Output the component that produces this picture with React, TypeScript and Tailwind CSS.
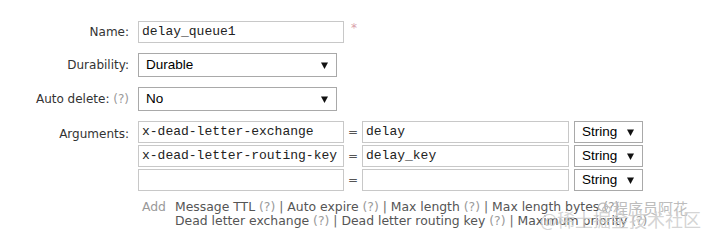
const labelCls = 'w-[130px] shrink-0 pr-[1px] text-right text-[12px] text-[#333]'

function Select({ value, width, height }: { value: string; width: string; height: string }) {
  return (
    <div
      className={`${width} ${height} flex items-center justify-between border border-[#a9a9a9] bg-white pl-[7px] pr-[8px] font-['Liberation_Sans',Arial,sans-serif] text-[13.5px] text-black`}
    >
      <span>{value}</span>
      <svg width="7" height="7" viewBox="0 0 7 7">
        <path d="M0 0.5 L7 0.5 L3.5 7 Z" fill="#111" />
      </svg>
    </div>
  )
}

function TextInput({ value, width }: { value: string; width: string }) {
  return (
    <div
      className={`${width} flex h-[22px] items-center border border-[#c8c8c8] bg-white px-[3px] font-['Liberation_Mono','Courier_New',monospace] text-[13px] text-[#222]`}
    >
      {value}
    </div>
  )
}

const Q = () => <span className="text-[#9a9a9a]">(?)</span>
const Sep = () => <span className="text-[#666]"> | </span>

const args = [
  { key: 'x-dead-letter-exchange', value: 'delay' },
  { key: 'x-dead-letter-routing-key', value: 'delay_key' },
  { key: '', value: '' },
]

export default function App() {
  return (
    <div className="relative h-[244px] w-[708px] overflow-hidden bg-white font-['DejaVu_Sans',Verdana,sans-serif]">
      <div className="flex flex-col pt-[21px]">
        {/* Name */}
        <div className="flex items-center">
          <span className={labelCls}>Name:</span>
          <div className="ml-[8px] flex items-start">
            <TextInput value="delay_queue1" width="w-[206px]" />
            <span className="ml-[7px] text-[12px] leading-[14px] text-[#d9a0aa]">*</span>
          </div>
        </div>

        {/* Durability */}
        <div className="mt-[10px] flex items-center">
          <span className={labelCls}>Durability:</span>
          <div className="ml-[8px]">
            <Select value="Durable" width="w-[199px]" height="h-[24px]" />
          </div>
        </div>

        {/* Auto delete */}
        <div className="mt-[10px] flex items-center">
          <span className={labelCls}>
            Auto delete: <Q />
          </span>
          <div className="ml-[8px]">
            <Select value="No" width="w-[199px]" height="h-[24px]" />
          </div>
        </div>

        {/* Arguments */}
        <div className="mt-[10px] flex items-start">
          <span className={`${labelCls} pt-[4px]`}>Arguments:</span>
          <div className="ml-[8px] flex flex-col gap-[2px]">
            {args.map((a, i) => (
              <div key={i} className="flex items-center">
                <TextInput value={a.key} width="w-[206px]" />
                <span className="w-[18px] text-center text-[12px] text-[#555]">=</span>
                <TextInput value={a.value} width="w-[207px]" />
                <div className="ml-[5px]">
                  <Select value="String" width="w-[69px]" height="h-[22px]" />
                </div>
              </div>
            ))}
          </div>
        </div>

        {/* Helpers */}
        <div className="mt-[9px] flex items-start text-[12.4px] leading-[14px] text-[#555]">
          <span className="ml-[142px] w-[33px] text-[#999]">Add</span>
          <div className="flex flex-col">
            <span className="whitespace-nowrap">
              Message TTL <Q />
              <Sep />
              Auto expire <Q />
              <Sep />
              Max length <Q />
              <Sep />
              Max length bytes <Q />
            </span>
            <span className="whitespace-nowrap">
              Dead letter exchange <Q />
              <Sep />
              Dead letter routing key <Q />
              <Sep />
              Maximum priority <Q />
            </span>
          </div>
        </div>
      </div>

      {/* watermark */}
      <div className="pointer-events-none absolute left-[598px] top-[199px] flex items-center gap-[2px] font-['Noto_Sans_CJK_SC',sans-serif] text-[15px] leading-[18px] text-[#bdbdbd]">
        <svg width="13" height="12" viewBox="0 0 13 12">
          <ellipse cx="5" cy="5" rx="4.5" ry="3.8" fill="none" stroke="#bdbdbd" strokeWidth="1.2" />
          <ellipse cx="8.5" cy="7.5" rx="3.8" ry="3.2" fill="none" stroke="#bdbdbd" strokeWidth="1.2" />
        </svg>
        <span>程序员阿花</span>
      </div>
      <div className="pointer-events-none absolute left-[540px] top-[209px] font-['Noto_Sans_CJK_SC',sans-serif] text-[18px] leading-[20px] text-[#cfcfcf]/90">
        @稀土掘金技术社区
      </div>
    </div>
  )
}
